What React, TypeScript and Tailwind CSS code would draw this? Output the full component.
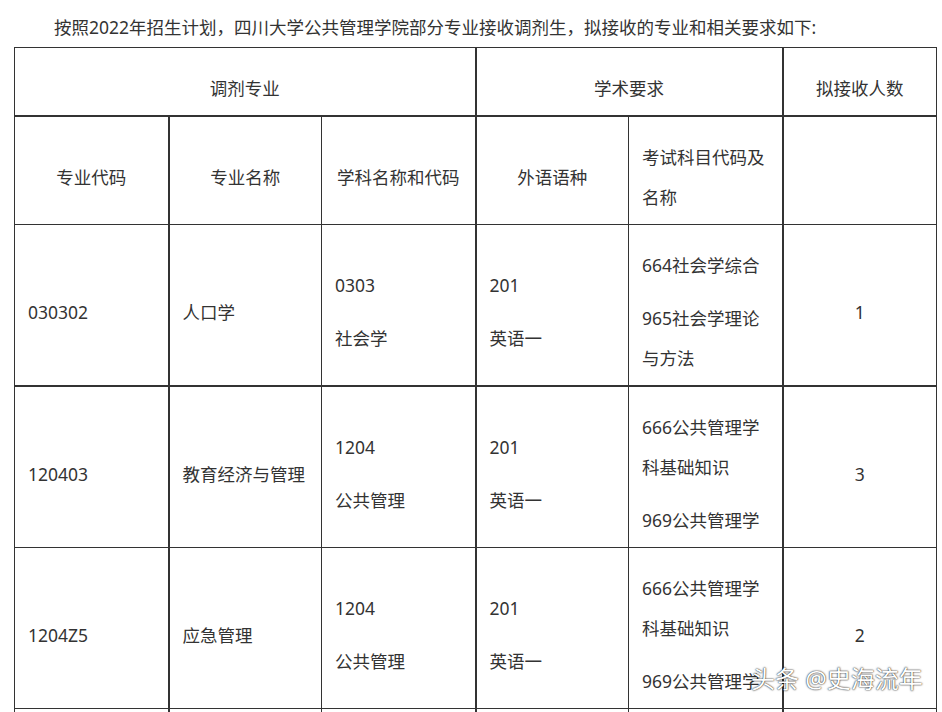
import React from "react";

const font = { fontFamily: '"Noto Sans", "Noto Sans CJK SC", sans-serif' };

function P({ children }: { children: React.ReactNode }) {
  return <p className="mt-[13px] leading-[40px]">{children}</p>;
}

export default function App() {
  const cell = "border border-[#333] align-middle px-[13px] pt-[7px] pb-[7px]";
  return (
    <div
      className="relative h-[712px] w-[942px] overflow-hidden bg-white text-[17.5px] text-[#333]"
      style={font}
    >
      <div className="px-[14px]">
        <p className="mt-[7px] indent-[40px] leading-[40px]">
          按照2022年招生计划，四川大学公共管理学院部分专业接收调剂生，拟接收的专业和相关要求如下:
        </p>
        <table className="w-[922px] table-fixed border-collapse">
          <colgroup>
            <col className="w-[154px]" />
            <col className="w-[153px]" />
            <col className="w-[154px]" />
            <col className="w-[153px]" />
            <col className="w-[154px]" />
            <col className="w-[154px]" />
          </colgroup>
          <tbody>
            <tr>
              <td colSpan={3} className={`${cell} border-b-2 text-center`}>
                <P>调剂专业</P>
              </td>
              <td colSpan={2} className={`${cell} border-b-2 border-l-2 border-r-2 text-center`}>
                <P>学术要求</P>
              </td>
              <td className={`${cell} border-b-2 text-center`}>
                <P>拟接收人数</P>
              </td>
            </tr>
            <tr>
              <td className={`${cell} border-r-2 text-center`}>
                <P>专业代码</P>
              </td>
              <td className={`${cell} text-center`}>
                <P>专业名称</P>
              </td>
              <td className={`${cell} border-r-2 text-center`}>
                <P>学科名称和代码</P>
              </td>
              <td className={`${cell} text-center`}>
                <P>外语语种</P>
              </td>
              <td className={`${cell} border-r-2 pr-[10px] text-left`}>
                <P>考试科目代码及名称</P>
              </td>
              <td className={`${cell} text-center`}></td>
            </tr>
            <tr>
              <td className={`${cell} border-b-2 border-r-2`}>
                <P>030302</P>
              </td>
              <td className={`${cell} border-b-2 pr-[6px]`}>
                <P>人口学</P>
              </td>
              <td className={`${cell} border-b-2 border-r-2`}>
                <P>0303</P>
                <P>社会学</P>
              </td>
              <td className={`${cell} border-b-2`}>
                <P>201</P>
                <P>英语一</P>
              </td>
              <td className={`${cell} border-b-2 border-r-2 pr-[10px]`}>
                <P>664社会学综合</P>
                <P>965社会学理论与方法</P>
              </td>
              <td className={`${cell} border-b-2 text-center`}>
                <P>1</P>
              </td>
            </tr>
            <tr>
              <td className={`${cell} border-r-2`}>
                <P>120403</P>
              </td>
              <td className={`${cell} pr-[6px]`}>
                <P>教育经济与管理</P>
              </td>
              <td className={`${cell} border-r-2`}>
                <P>1204</P>
                <P>公共管理</P>
              </td>
              <td className={`${cell}`}>
                <P>201</P>
                <P>英语一</P>
              </td>
              <td className={`${cell} border-r-2 pr-[10px]`}>
                <P>666公共管理学科基础知识</P>
                <P>969公共管理学</P>
              </td>
              <td className={`${cell} text-center`}>
                <P>3</P>
              </td>
            </tr>
            <tr>
              <td className={`${cell} border-r-2`}>
                <P>1204Z5</P>
              </td>
              <td className={`${cell} pr-[6px]`}>
                <P>应急管理</P>
              </td>
              <td className={`${cell} border-r-2`}>
                <P>1204</P>
                <P>公共管理</P>
              </td>
              <td className={`${cell}`}>
                <P>201</P>
                <P>英语一</P>
              </td>
              <td className={`${cell} border-r-2 pr-[10px]`}>
                <P>666公共管理学科基础知识</P>
                <P>969公共管理学</P>
              </td>
              <td className={`${cell} text-center`}>
                <P>2</P>
              </td>
            </tr>
            <tr>
              <td className={`${cell} h-[60px] border-r-2`}></td>
              <td className={`${cell}`}></td>
              <td className={`${cell} border-r-2`}></td>
              <td className={`${cell}`}></td>
              <td className={`${cell} border-r-2`}></td>
              <td className={`${cell}`}></td>
            </tr>
          </tbody>
        </table>
      </div>
      <div className="absolute left-[751px] top-[664px] text-[24px] leading-[30px] text-white [text-shadow:0_0_2px_rgba(0,0,0,0.8),0_0_1px_rgba(0,0,0,0.7)]">
        头条 @史海流年
      </div>
    </div>
  );
}
